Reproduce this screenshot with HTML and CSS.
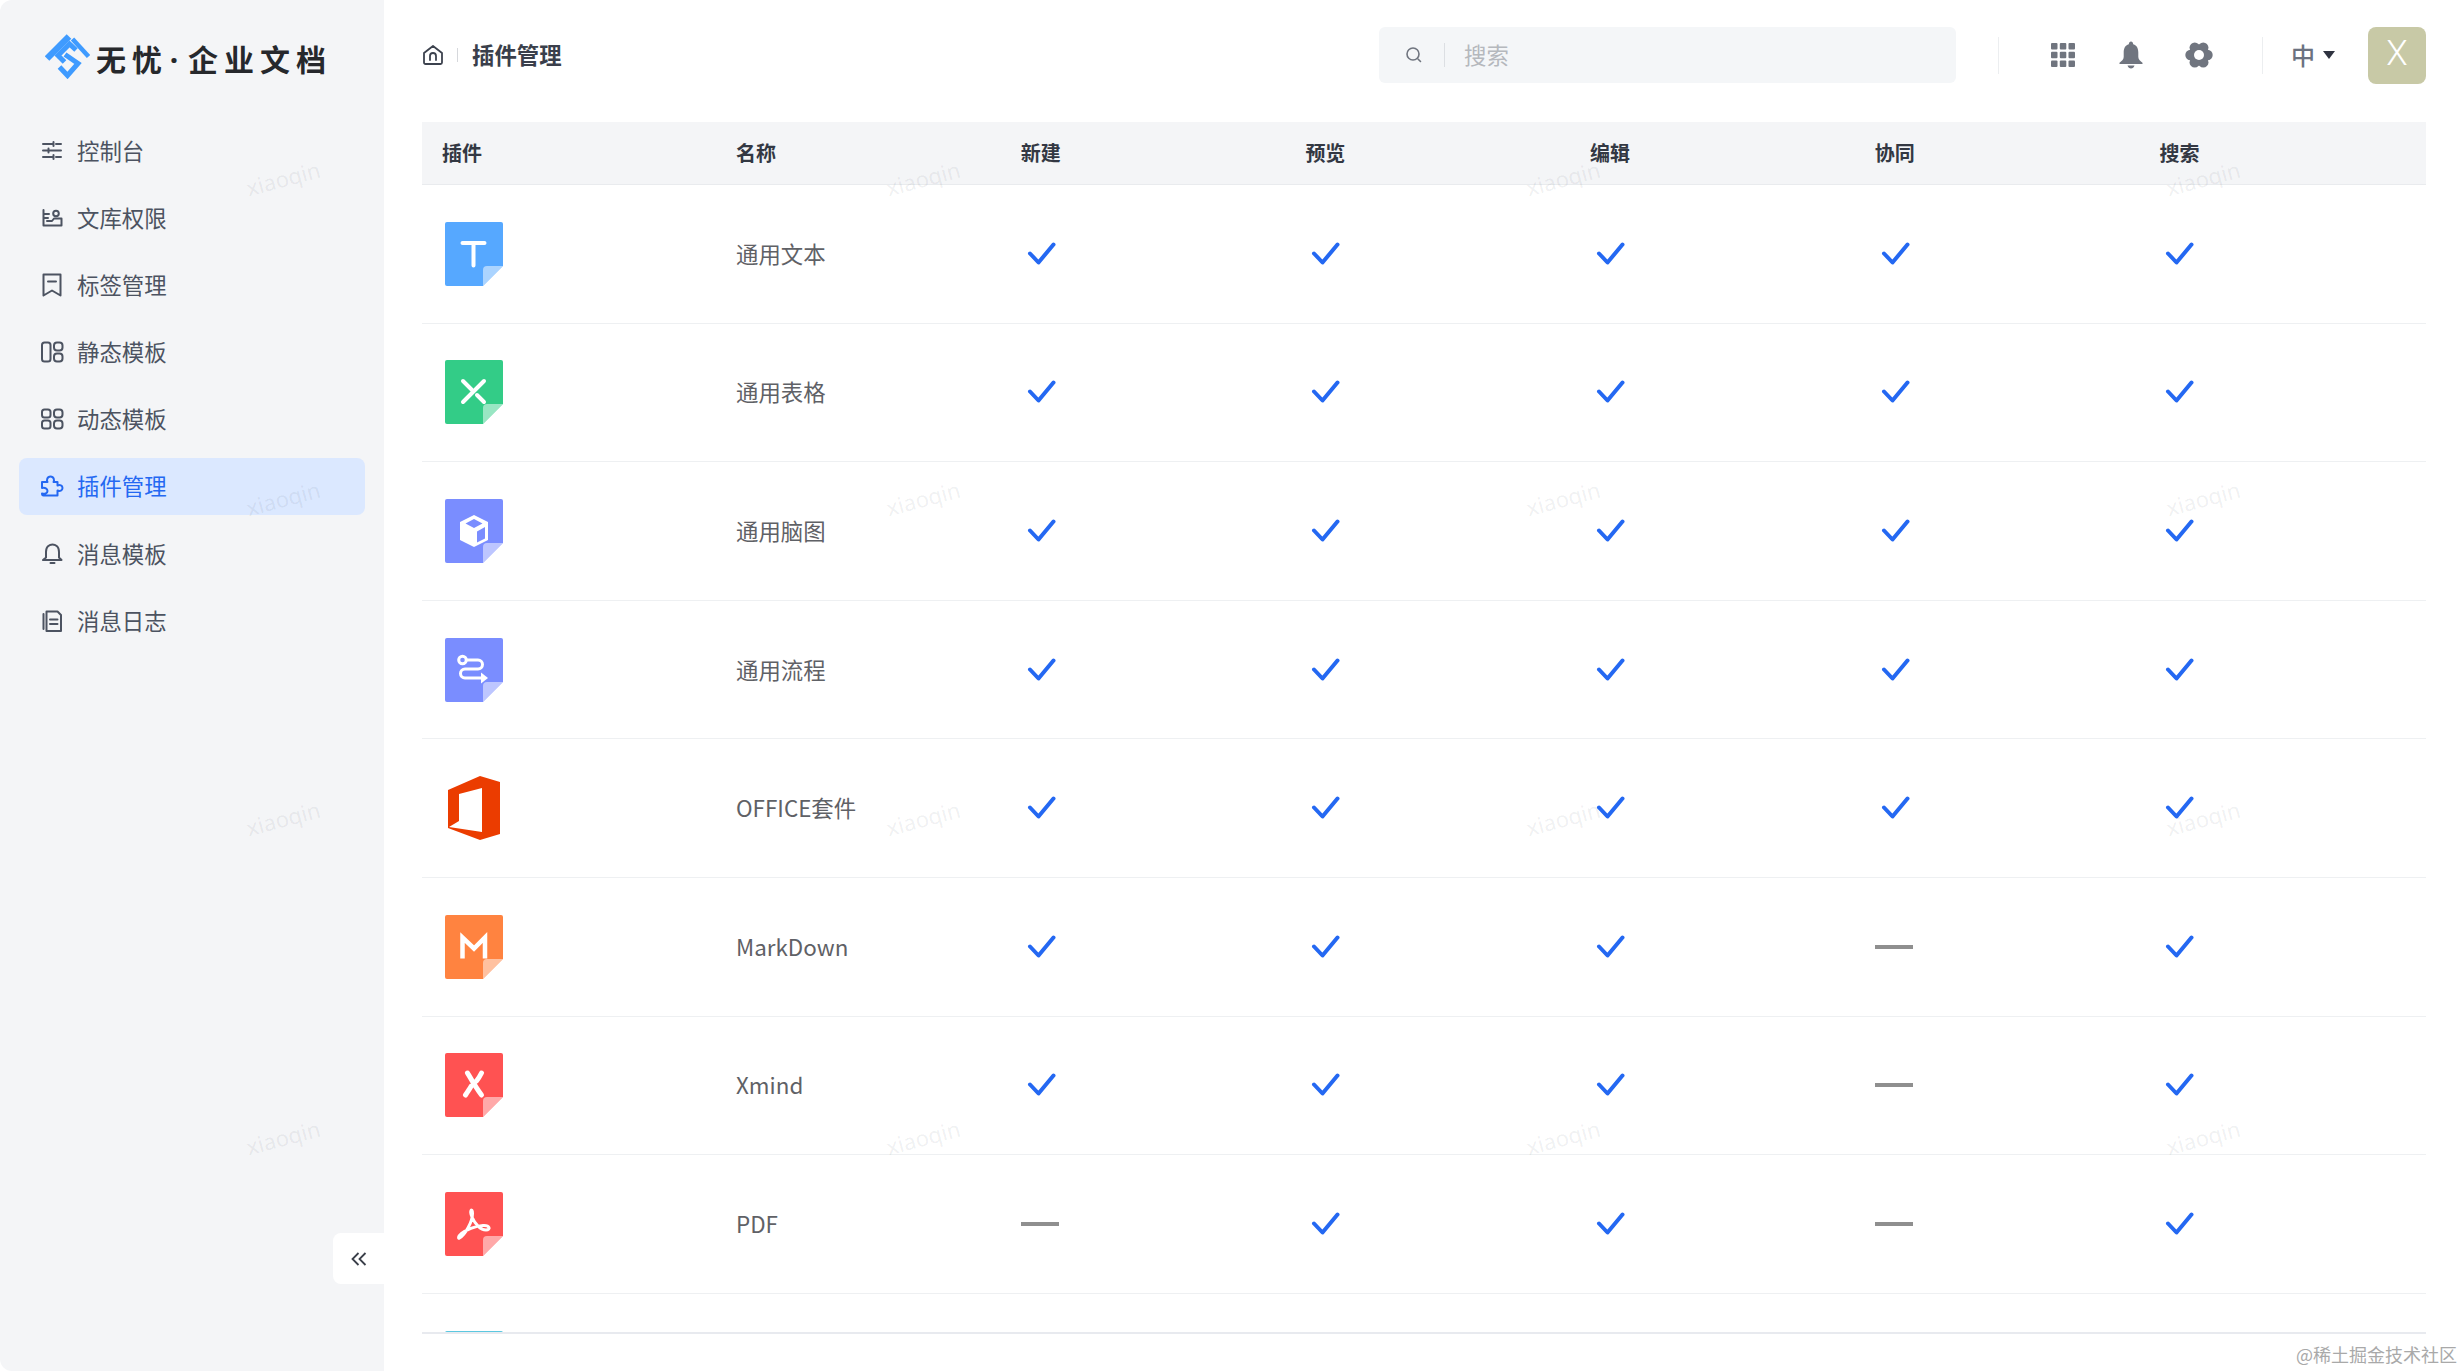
FILE: index.html
```html
<!DOCTYPE html>
<html lang="zh-CN">
<head>
<meta charset="utf-8">
<title>插件管理</title>
<link rel="stylesheet" href="styles.css">
</head>
<body>
<svg class="sprite" aria-hidden="true">
  <symbol id="check" viewBox="0 0 44 24"><path d="M9 11.500 17.500 20.500 32.500 2.500" fill="none" stroke="#2468f2" stroke-width="4" stroke-linecap="round" stroke-linejoin="round"/></symbol>
  <symbol id="sheet" viewBox="0 0 58 64"><path d="M2 0H56a2 2 0 0 1 2 2V44L38 64H2a2 2 0 0 1-2-2V2a2 2 0 0 1 2-2Z" fill="currentColor"/><path d="M38 64V48a4 4 0 0 1 4-4H58Z" fill="#fff" opacity=".5"/></symbol>
</svg>
<div class="app">
  <aside class="sidebar">
    <div class="brand">
      <svg class="brand-mark" viewBox="0 0 45 45"><g fill="none" stroke="#3f9bff" stroke-linejoin="miter"><path d="M2 24.500 24 2.500" stroke-width="6.500"/><path d="M27.500 5 43.500 22.500" stroke-width="4.500"/><path d="M31 16 24.500 10 13 21.500 19.500 28" stroke-width="5"/><path d="M20 20.500 33 29.500 22.500 41.500 14.500 33" stroke-width="5"/></g></svg>
      <span class="brand-name">无忧<b class="dot">·</b>企业文档</span>
    </div>
    <nav class="menu">
      <a class="menu-item"><svg class="menu-icon" viewBox="0 0 24 24"><path d="M3 5H13M16 5H21M3 11.500H7M10 11.500H21M3 18H13M16 18H21M13.500 3V7M8.500 9.500V13.500M13.500 16V20"/></svg>控制台</a>
      <a class="menu-item"><svg class="menu-icon" viewBox="0 0 24 24"><path d="M3.500 4V19.500H21.500V12.500H14L12 15H7M3.500 8H9M3.500 12H8"/><circle cx="16" cy="7.500" r="2.800"/></svg>文库权限</a>
      <a class="menu-item"><svg class="menu-icon" viewBox="0 0 24 24"><path d="M3.500 1.500H20.500V22.500L12 17.500 3.500 22.500ZM8 8.500H16"/></svg>标签管理</a>
      <a class="menu-item"><svg class="menu-icon" viewBox="0 0 24 24"><rect x="2" y="2.500" width="8.500" height="19" rx="2.500"/><rect x="14" y="2.500" width="8.500" height="8" rx="3"/><rect x="14" y="13.500" width="8.500" height="8" rx="3"/></svg>静态模板</a>
      <a class="menu-item"><svg class="menu-icon" viewBox="0 0 24 24"><rect x="2" y="2.500" width="8.500" height="8" rx="2.500"/><rect x="14" y="2.500" width="8.500" height="8" rx="3"/><rect x="2" y="13.500" width="8.500" height="8" rx="2.500"/><rect x="14" y="13.500" width="8.500" height="8" rx="3"/></svg>动态模板</a>
      <a class="menu-item is-active"><svg class="menu-icon" viewBox="0 0 24 24"><path d="M2 14V8H7.500C6.500 6.500 7 2.500 10.500 2.500S14.500 6.500 13.500 8H17.500V11.500C20 10.500 22.500 11.500 22.500 14S20 17.500 17.500 16.500V21.500H3.500C2 21.500 2 20.500 2 19.500C5 20.500 7.500 19 7.500 17S5 13 2 14Z"/></svg>插件管理</a>
      <a class="menu-item"><svg class="menu-icon" viewBox="0 0 24 24"><path d="M3 18H21.500L19 15.500V10C19 4 15 2.500 12.500 2.500S6 4 6 10V15.500ZM10.500 21H14.500"/></svg>消息模板</a>
      <a class="menu-item"><svg class="menu-icon" viewBox="0 0 24 24"><path d="M6.500 2.500H17.500L21 6V22H6.500ZM10 10.500H17.500M10 15H17.500M3.500 5V20"/></svg>消息日志</a>
    </nav>
    <button class="collapse" aria-label="收起"><svg viewBox="0 0 16 14"><path d="M7.500 1 1.500 7 7.500 13M14.500 1 8.500 7 14.500 13"/></svg></button>
  </aside>

  <main class="main">
    <header class="topbar">
      <svg class="home" viewBox="0 0 20 20"><path d="M1 8 10 1 19 8V17.500A1.500 1.500 0 0 1 17.500 19H2.500A1.500 1.500 0 0 1 1 17.500ZM7 15V11A3 3 0 0 1 13 11V15"/></svg>
      <i class="crumb-sep"></i>
      <span class="crumb">插件管理</span>
      <div class="search">
        <svg class="search-icon" viewBox="0 0 18 18"><circle cx="8" cy="8" r="6"/><path d="M13 13 15.500 15.500"/></svg>
        <i class="search-sep"></i>
        <span class="search-text">搜索</span>
      </div>
      <i class="bar-sep sep-first"></i>
      <div class="tools">
        <svg class="tool" viewBox="0 0 28 28"><g fill="#70757f"><rect x="2" y="2" width="6.500" height="6.500" rx="1"/><rect x="10.800" y="2" width="6.500" height="6.500" rx="1"/><rect x="19.500" y="2" width="6.500" height="6.500" rx="1"/><rect x="2" y="10.800" width="6.500" height="6.500" rx="1"/><rect x="10.800" y="10.800" width="6.500" height="6.500" rx="1"/><rect x="19.500" y="10.800" width="6.500" height="6.500" rx="1"/><rect x="2" y="19.500" width="6.500" height="6.500" rx="1"/><rect x="10.800" y="19.500" width="6.500" height="6.500" rx="1"/><rect x="19.500" y="19.500" width="6.500" height="6.500" rx="1"/></g></svg>
        <svg class="tool" viewBox="0 0 28 28"><path fill="#70757f" d="M14 0.500C15.300 0.500 16 1.500 16.200 3.200 20 4.300 21.300 7.500 21.300 11.500V16C21.300 18.500 23.500 20 25.500 21.800V23H2.500V21.800C4.500 20 6.700 18.500 6.700 16V11.500C6.700 7.500 8 4.300 11.800 3.200 12 1.500 12.700 .5 14 .5ZM10.500 24.500H17.500C17 26.500 15.500 27.500 14 27.500S11 26.500 10.500 24.500Z"/></svg>
        <svg class="tool" viewBox="0 0 28 28"><g fill="#70757f"><circle cx="14" cy="14" r="10.500"/><circle cx="22.500" cy="14" r="5.200"/><circle cx="5.500" cy="14" r="5.200"/><circle cx="18.250" cy="6.600" r="5.200"/><circle cx="9.750" cy="6.600" r="5.200"/><circle cx="18.250" cy="21.400" r="5.200"/><circle cx="9.750" cy="21.400" r="5.200"/></g><circle cx="14" cy="14" r="5" fill="#fff"/></svg>
      </div>
      <i class="bar-sep sep-second"></i>
      <span class="lang">中</span>
      <i class="caret"></i>
      <span class="avatar">X</span>
    </header>

    <section class="table">
      <div class="row head">
        <div class="cell">插件</div><div class="cell">名称</div><div class="cell">新建</div><div class="cell">预览</div><div class="cell">编辑</div><div class="cell">协同</div><div class="cell">搜索</div>
      </div>

      <div class="row">
        <div class="cell"><svg class="doc doc-blue" viewBox="0 0 58 64"><use href="#sheet"/><path class="g" d="M17.500 21H39.500M28.500 21V43.500"/></svg></div>
        <div class="cell name">通用文本</div>
        <div class="cell"><svg class="yes"><use href="#check"/></svg></div><div class="cell"><svg class="yes"><use href="#check"/></svg></div><div class="cell"><svg class="yes"><use href="#check"/></svg></div><div class="cell"><svg class="yes"><use href="#check"/></svg></div><div class="cell"><svg class="yes"><use href="#check"/></svg></div>
      </div>
      <div class="row">
        <div class="cell"><svg class="doc doc-green" viewBox="0 0 58 64"><use href="#sheet"/><path class="g" d="M39 21 18 42M18 21 26.500 29.500M32 35 39 42"/></svg></div>
        <div class="cell name">通用表格</div>
        <div class="cell"><svg class="yes"><use href="#check"/></svg></div><div class="cell"><svg class="yes"><use href="#check"/></svg></div><div class="cell"><svg class="yes"><use href="#check"/></svg></div><div class="cell"><svg class="yes"><use href="#check"/></svg></div><div class="cell"><svg class="yes"><use href="#check"/></svg></div>
      </div>
      <div class="row">
        <div class="cell"><svg class="doc doc-violet" viewBox="0 0 58 64"><use href="#sheet"/><path fill="#fff" fill-rule="evenodd" d="M29 16 43 23V41L29 48 15 41V23ZM29 20 20.500 24.500 29 29 37.500 24.500ZM40 28 32 32.500V43.500L40 39.500Z"/></svg></div>
        <div class="cell name">通用脑图</div>
        <div class="cell"><svg class="yes"><use href="#check"/></svg></div><div class="cell"><svg class="yes"><use href="#check"/></svg></div><div class="cell"><svg class="yes"><use href="#check"/></svg></div><div class="cell"><svg class="yes"><use href="#check"/></svg></div><div class="cell"><svg class="yes"><use href="#check"/></svg></div>
      </div>
      <div class="row">
        <div class="cell"><svg class="doc doc-violet" viewBox="0 0 58 64"><use href="#sheet"/><circle class="g thin" cx="17.500" cy="22" r="3.800"/><path class="g thin" d="M22 22H33A4.500 4.500 0 0 1 33 31H20A4.500 4.500 0 0 0 20 40H36"/><path fill="#fff" d="M36 34.500 43 40 36 45.500Z"/></svg></div>
        <div class="cell name">通用流程</div>
        <div class="cell"><svg class="yes"><use href="#check"/></svg></div><div class="cell"><svg class="yes"><use href="#check"/></svg></div><div class="cell"><svg class="yes"><use href="#check"/></svg></div><div class="cell"><svg class="yes"><use href="#check"/></svg></div><div class="cell"><svg class="yes"><use href="#check"/></svg></div>
      </div>
      <div class="row">
        <div class="cell"><svg class="office" viewBox="0 0 52 64"><path fill="#eb3c00" fill-rule="evenodd" d="M0 14 32 0 52 6V58L32 64 0 52ZM11 18V45L1 51 34 56V12Z"/></svg></div>
        <div class="cell name">OFFICE套件</div>
        <div class="cell"><svg class="yes"><use href="#check"/></svg></div><div class="cell"><svg class="yes"><use href="#check"/></svg></div><div class="cell"><svg class="yes"><use href="#check"/></svg></div><div class="cell"><svg class="yes"><use href="#check"/></svg></div><div class="cell"><svg class="yes"><use href="#check"/></svg></div>
      </div>
      <div class="row">
        <div class="cell"><svg class="doc doc-orange" viewBox="0 0 58 64"><use href="#sheet"/><path class="g square" d="M17.500 43.500V22.500L29 33.500 40 22.500V43.500"/></svg></div>
        <div class="cell name">MarkDown</div>
        <div class="cell"><svg class="yes"><use href="#check"/></svg></div><div class="cell"><svg class="yes"><use href="#check"/></svg></div><div class="cell"><svg class="yes"><use href="#check"/></svg></div><div class="cell"><i class="no"></i></div><div class="cell"><svg class="yes"><use href="#check"/></svg></div>
      </div>
      <div class="row">
        <div class="cell"><svg class="doc doc-red" viewBox="0 0 58 64"><use href="#sheet"/><path class="g wide" d="M22.500 20C26 26 31 35 36.500 42M36.500 20C35 23 33.500 25.500 31.500 28M26 33.500C24.500 36 22.500 39 20.500 42"/></svg></div>
        <div class="cell name">Xmind</div>
        <div class="cell"><svg class="yes"><use href="#check"/></svg></div><div class="cell"><svg class="yes"><use href="#check"/></svg></div><div class="cell"><svg class="yes"><use href="#check"/></svg></div><div class="cell"><i class="no"></i></div><div class="cell"><svg class="yes"><use href="#check"/></svg></div>
      </div>
      <div class="row">
        <div class="cell"><svg class="doc doc-red" viewBox="0 0 58 64"><use href="#sheet"/><path class="g thin" d="M14.500 46C20 43 27.500 30 27.500 21.500 27.500 15.500 24 18 27 25 30 32 35.500 38 41 38 46 38 45 33 38 33.500 30 34 21 38 16.500 41.500 13 44.500 13 47 14.500 46Z"/></svg></div>
        <div class="cell name">PDF</div>
        <div class="cell"><i class="no"></i></div><div class="cell"><svg class="yes"><use href="#check"/></svg></div><div class="cell"><svg class="yes"><use href="#check"/></svg></div><div class="cell"><i class="no"></i></div><div class="cell"><svg class="yes"><use href="#check"/></svg></div>
      </div>
      <div class="row">
        <div class="cell"><svg class="doc doc-cyan" viewBox="0 0 58 64"><use href="#sheet"/></svg></div>
      </div>
    </section>
  </main>

  <div class="marks" aria-hidden="true">
    <span>xiaoqin</span><span>xiaoqin</span><span>xiaoqin</span><span>xiaoqin</span>
    <span>xiaoqin</span><span>xiaoqin</span><span>xiaoqin</span><span>xiaoqin</span>
    <span>xiaoqin</span><span>xiaoqin</span><span>xiaoqin</span><span>xiaoqin</span>
    <span>xiaoqin</span><span>xiaoqin</span><span>xiaoqin</span><span>xiaoqin</span>
  </div>
  <div class="credit">@稀土掘金技术社区</div>
</div>
</body>
</html>
```

FILE: styles.css
```css
* { box-sizing: border-box; }
html, body { margin: 0; height: 100%; background: #fff; }
body { font-family: "Noto Sans CJK SC", "Noto Sans", sans-serif; overflow: hidden; }
i { display: block; font-style: normal; }
.sprite { display: none; }

.app { position: relative; display: flex; width: 2463px; height: 1371px; overflow: hidden; }

/* sidebar */
.sidebar { position: relative; flex: 0 0 384px; background: #f4f5f7; border-radius: 12px 0 0 12px; padding: 0 19px; }
.brand { display: flex; align-items: center; height: 122px; padding: 0 0 10px 26px; }
.brand-mark { width: 45px; height: 45px; flex: none; }
.brand-name { margin: 5px 0 0 6px; font-size: 30px; line-height: 44px; font-weight: 700; letter-spacing: 6px; color: #26282c; white-space: nowrap; }
.dot { display: inline-block; width: 12px; margin-right: 8px; letter-spacing: 0; text-align: center; font-family: "Noto Sans", sans-serif; font-weight: 700; }
.menu { display: flex; flex-direction: column; gap: 10.2px; }
.menu-item { display: flex; align-items: center; height: 57px; padding: 0 0 2px 21px; border-radius: 8px; font-size: 22.4px; color: #4c5361; }
.menu-icon { width: 24px; height: 24px; flex: none; margin: 2px 13px 0 0; fill: none; stroke: currentColor; stroke-width: 2; stroke-linecap: round; stroke-linejoin: round; }
.is-active { background: #dbe8ff; color: #2468f2; }
.collapse { position: absolute; right: 0; bottom: 87px; width: 51px; height: 51px; padding: 0; border: 0; border-radius: 8px 0 0 8px; background: #fff; display: flex; align-items: center; justify-content: center; }
.collapse svg { width: 16px; height: 14px; fill: none; stroke: #3a3f49; stroke-width: 1.8; }

/* top bar */
.main { flex: 1; min-width: 0; padding: 0 37px 0 38px; display: flex; flex-direction: column; }
.topbar { display: flex; align-items: center; height: 122px; padding: 27px 0 39px; flex: none; }
.home { width: 20px; height: 20px; margin: 0 0 0 1px; fill: none; stroke: #3c424e; stroke-width: 1.8; stroke-linejoin: round; stroke-linecap: round; }
.crumb-sep { width: 1px; height: 14px; margin: 0 14px; background: #d6d8dc; }
.crumb { margin-bottom: 3px; font-size: 22.4px; font-weight: 700; color: #3a3f4b; }
.search { display: flex; align-items: center; width: 577px; height: 56px; margin-left: auto; padding-left: 26px; border-radius: 6px; background: #f4f6f8; }
.search-icon { width: 18px; height: 18px; fill: none; stroke: #70757f; stroke-width: 1.6; stroke-linecap: round; }
.search-sep { width: 1px; height: 24px; margin: 0 19px 0 21px; background: #dcdfe3; }
.search-text { margin-bottom: 3px; font-size: 22.4px; color: #b5b8bd; }
.bar-sep { width: 1px; height: 37px; background: #eceef0; }
.sep-first { margin-left: 42px; }
.tools { display: flex; gap: 40px; margin-left: 50px; }
.tool { width: 28px; height: 28px; display: block; }
.sep-second { margin-left: 49px; }
.lang { margin: 0 0 2px 28px; font-size: 24px; font-weight: 500; color: #6b7280; }
.caret { width: 0; height: 0; margin: 0 33px 0 8px; border-left: 6.5px solid transparent; border-right: 6.5px solid transparent; border-top: 8px solid #2f3340; }
.avatar { display: flex; align-items: center; justify-content: center; width: 58px; height: 57px; padding-bottom: 4px; border-radius: 8px; background: #c8c9a6; color: #fff; font: 300 35px Roboto, sans-serif; }

/* table */
.table { height: 1212px; border-bottom: 2px solid #e8eaef; overflow: hidden; flex: none; }
.row { display: grid; grid-template-columns: 294px repeat(5, 284.7px) 1fr; align-items: center; height: 138.6px; border-bottom: 1px solid #eef0f2; }
.head { height: 63px; padding-bottom: 2px; background: #f4f5f7; border-bottom-color: #e9ebee; font-size: 20px; font-weight: 700; color: #333843; }
.cell { padding-left: 20px; min-width: 0; }
.name { padding-bottom: 2px; font-size: 22.4px; color: #5f6166; white-space: nowrap; }
.doc { display: block; width: 58px; height: 64px; margin-left: 3px; }
.office { display: block; width: 52px; height: 64px; margin-left: 6px; }
.doc-blue { color: #56a8ff; }
.doc-green { color: #33cc87; }
.doc-violet { color: #7a8dff; }
.doc-orange { color: #ff8340; }
.doc-red { color: #ff5252; }
.doc-cyan { color: #5cc8e0; }
.g { fill: none; stroke: #fff; stroke-width: 4; stroke-linecap: round; stroke-linejoin: round; }
.thin { stroke-width: 3; }
.wide { stroke-width: 5; }
.square { stroke-width: 4.5; stroke-linecap: butt; stroke-linejoin: miter; }
.yes { display: block; width: 44px; height: 24px; }
.no { width: 38px; height: 4px; background: #8f8f8f; }

/* overlay */
.marks { position: absolute; left: -37px; top: 18px; display: grid; grid-template-columns: repeat(4, 640px); grid-auto-rows: 319.8px; pointer-events: none; }
.marks span { display: flex; align-items: center; justify-content: center; font: 400 22px "Noto Sans", sans-serif; color: rgba(40, 50, 70, .08); transform: rotate(-15deg); }
.credit { position: absolute; right: 6px; bottom: 4px; font-size: 18px; line-height: 26px; color: #a9a9a9; white-space: nowrap; }
```
